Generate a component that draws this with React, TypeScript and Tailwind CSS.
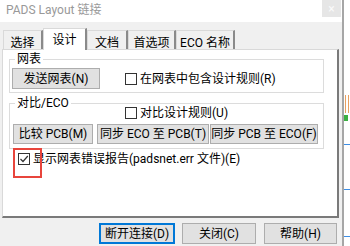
import type { ReactNode } from "react";

function Check({ checked, label }: { checked?: boolean; label: string }) {
    return (
        <div className="flex items-center gap-[3px] h-[14px]">
            <span className="w-[12px] h-[12px] border border-[#333333] bg-white flex items-center justify-center">
                {checked && (
                    <svg width="10" height="10" viewBox="0 0 10 10">
                        <path d="M1.5 5 L4 7.5 L8.8 2" fill="none" stroke="#333333" strokeWidth="1.2" />
                    </svg>
                )}
            </span>
            <span className="text-[12px] leading-[14px] whitespace-nowrap">{label}</span>
        </div>
    );
}

function Btn({ w, h = 21, focus, children }: { w: number; h?: number; focus?: boolean; children: ReactNode }) {
    return (
        <div
            style={{ width: w, height: h }}
            className={
                "flex items-center justify-center text-[12px] whitespace-nowrap bg-[#e1e1e1] " +
                (focus ? "border-2 border-[#0078d7]" : "border border-[#adadad]")
            }
        >
            {children}
        </div>
    );
}

function Tab({ w, selected, children }: { w: number; selected?: boolean; children: ReactNode }) {
    return (
        <div
            style={{ width: w }}
            className={
                "flex justify-center text-[12px] border-l border-t border-[#d9d9d9] border-r-2 border-r-[#8a8a8a] " +
                (selected
                    ? "h-[22px] bg-white relative z-10 -mb-px pt-[2px] border-r-[#6e6e6e]"
                    : "h-[19px] bg-[#f0f0f0] pt-[3px]")
            }
        >
            {children}
        </div>
    );
}

export default function App() {
    return (
        <div className="w-[350px] h-[246px] overflow-hidden relative flex bg-[#f0f0f0] text-black font-['Roboto','Noto_Sans_CJK_SC',sans-serif]">
            {/* dialog */}
            <div className="w-[342px] h-full flex flex-col">
                <div className="h-[22px] bg-white flex justify-between">
                    <span className="text-[12px] text-[#999999] pl-[6px] pt-[3px] leading-[14px]">PADS Layout 链接</span>
                    <div className="w-[19px] h-[17px] bg-[#e6e6e6] text-[#fafafa] text-[12px] flex items-center justify-center mr-[1px]">×</div>
                </div>

                <div className="flex items-end h-[21px] mt-[6px] pl-[3px]">
                    <Tab w={40}>选择</Tab>
                    <Tab w={44} selected>设计</Tab>
                    <Tab w={41}>文档</Tab>
                    <Tab w={48}>首选项</Tab>
                    <Tab w={59}>ECO 名称</Tab>
                </div>

                <div className="ml-[2px] w-[337px] h-[169px] bg-white border-l border-t border-[#d9d9d9] border-r-2 border-b-2 border-r-[#7a7a7a] border-b-[#7a7a7a] pl-[6px] pt-[3px]">
                    <fieldset className="w-[315px] border border-[#dcdcdc] px-[2px] pb-[3px]">
                        <legend className="ml-[3px] px-[2px] text-[12px] leading-[12px]">网表</legend>
                        <div className="flex items-center mt-[3px]">
                            <Btn w={88}>发送网表(N)</Btn>
                            <div className="ml-[25px]">
                                <Check label="在网表中包含设计规则(R)" />
                            </div>
                        </div>
                    </fieldset>

                    <fieldset className="w-[315px] border border-[#dcdcdc] px-[3px] pb-[4px] mt-[4px]">
                        <legend className="ml-[2px] px-[2px] text-[12px] leading-[12px]">对比/ECO</legend>
                        <div className="ml-[112px] -mt-[3px]">
                            <Check label="对比设计规则(U)" />
                        </div>
                        <div className="flex mt-[4px]">
                            <Btn w={80} h={20}>比较 PCB(M)</Btn>
                            <div className="ml-[4px]">
                                <Btn w={112} h={20}>同步 ECO 至 PCB(T)</Btn>
                            </div>
                            <div className="ml-[1px]">
                                <Btn w={108} h={20}>同步 PCB 至 ECO(F)</Btn>
                            </div>
                        </div>
                    </fieldset>

                    <div className="mt-[3px] ml-[9px]">
                        <Check checked label="显示网表错误报告(padsnet.err 文件)(E)" />
                    </div>
                </div>

                <div className="flex mt-[5px] pl-[99px] gap-[7px]">
                    <Btn w={76} focus>断开连接(D)</Btn>
                    <Btn w={74}>关闭(C)</Btn>
                    <div className="ml-[1px]">
                        <Btn w={73}>帮助(H)</Btn>
                    </div>
                </div>
            </div>

            {/* window border and the window behind */}
            <div className="w-[2px] h-full bg-[#a6a6a6]" />
            <div className="flex-1 h-full bg-white flex flex-col">
                <div className="h-[95px]" />
                <div className="flex gap-[2px] ml-[1px]">
                    <div className="w-px h-[18px] bg-[#e8a060]" />
                    <div className="w-px h-[18px] bg-[#e8a060]" />
                </div>
                <div className="h-[6px] w-[4px] bg-[#3cb043] mt-[2px]" />
                <div className="h-[23px]" />
                <div className="h-px bg-[#3c8ee6]" />
                <div className="h-[44px]" />
                <div className="h-px bg-[#3c8ee6]" />
                <div className="h-[46px]" />
                <div className="h-px bg-[#3c8ee6]" />
            </div>

            {/* red highlight over the checkbox */}
            <div className="absolute left-[13px] top-[148px] w-[29px] h-[30px] border-2 border-[#e8453c]" />
        </div>
    );
}
